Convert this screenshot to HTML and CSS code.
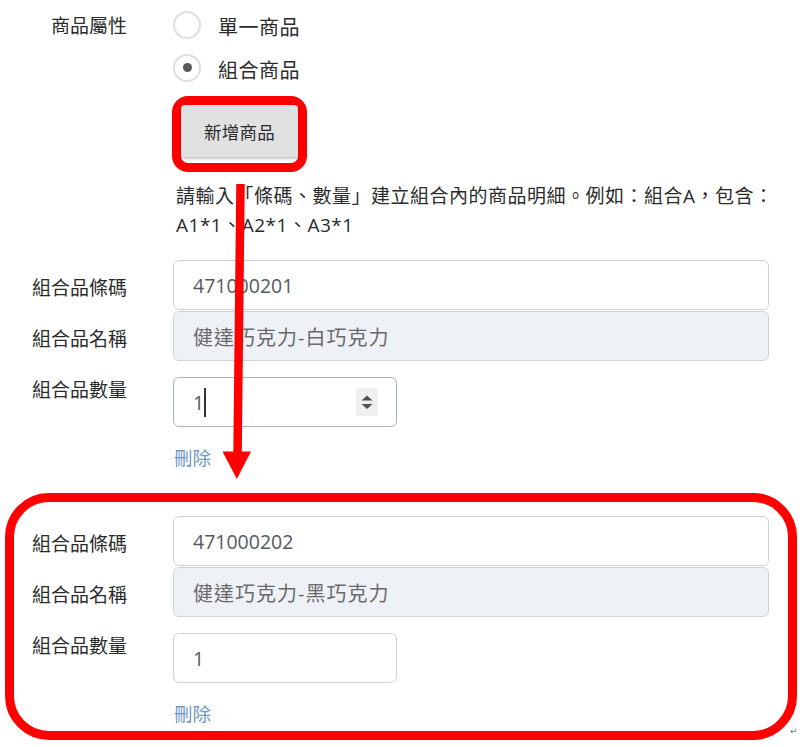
FILE: index.html
```
<!DOCTYPE html>
<html lang="zh-Hant">
<head>
<meta charset="utf-8">
<title>組合商品</title>
<link rel="stylesheet" href="styles.css">
</head>
<body>
<div class="page">
  <div class="type-row">
    <div class="type-label">商品屬性</div>
    <div class="type-controls">
      <label class="radio-item"><span class="radio"></span><span class="radio-text">單一商品</span></label>
      <label class="radio-item"><span class="radio radio-checked"></span><span class="radio-text">組合商品</span></label>
      <div class="btn-highlight"><button class="btn-add" type="button">新增商品</button></div>
      <p class="help">請輸入「條碼、數量」建立組合內的商品明細。例如：組合A，包含：<br>A1*1、A2*1、A3*1</p>
    </div>
  </div>

  <div class="combo-group">
    <div class="field-row">
      <div class="field-label">組合品條碼</div>
      <input class="input" type="text" value="471000201">
    </div>
    <div class="field-row row-tight">
      <div class="field-label">組合品名稱</div>
      <input class="input input-readonly" type="text" value="健達巧克力-白巧克力" readonly>
    </div>
    <div class="field-row row-qty">
      <div class="field-label label-top">組合品數量</div>
      <div class="qty-field qty-focus">
        <span class="qty-value">1</span><span class="caret"></span>
        <span class="spinner">
          <svg width="22" height="28" viewBox="0 0 22 28"><polygon points="5.5,12.5 16.5,12.5 11,7.5" fill="#505050"/><polygon points="5.5,16 16.5,16 11,21" fill="#505050"/></svg>
        </span>
      </div>
    </div>
    <div class="field-row row-delete">
      <div></div>
      <a class="delete-link" href="#">刪除</a>
    </div>
  </div>

  <div class="combo-group combo-boxed">
    <div class="field-row">
      <div class="field-label">組合品條碼</div>
      <input class="input" type="text" value="471000202">
    </div>
    <div class="field-row row-tight">
      <div class="field-label">組合品名稱</div>
      <input class="input input-readonly" type="text" value="健達巧克力-黑巧克力" readonly>
    </div>
    <div class="field-row row-qty">
      <div class="field-label label-top">組合品數量</div>
      <div class="qty-field">
        <span class="qty-value">1</span>
      </div>
    </div>
    <div class="field-row row-delete">
      <div></div>
      <a class="delete-link" href="#">刪除</a>
    </div>
  </div>

  <svg class="arrow" width="802" height="747" viewBox="0 0 802 747">
    <line x1="240.5" y1="184" x2="237.5" y2="456" stroke="#ff0000" stroke-width="8.5"/>
    <polygon points="222.5,451.5 251,451.5 236.8,479" fill="#ff0000"/>
  </svg>
  <span class="para-mark">↵</span>
</div>
</body>
</html>
```

FILE: styles.css
```
* { box-sizing: border-box; }

html, body {
  margin: 0;
  padding: 0;
  background: #ffffff;
}

body {
  font-family: "Open Sans", "Noto Sans CJK TC", sans-serif;
  color: #2b2b2b;
}

.page {
  position: relative;
  width: 802px;
  height: 747px;
  padding-top: 3px;
  overflow: hidden;
}

/* top row: product type */
.type-row {
  display: grid;
  grid-template-columns: 127px minmax(0, 1fr);
  column-gap: 46px;
  padding-right: 33px;
}

.type-label {
  text-align: right;
  font-size: 19px;
  line-height: 43px;
  padding-top: 2px;
  white-space: nowrap;
  color: #2b2b2b;
}

.type-controls {
  display: flex;
  flex-direction: column;
  align-items: flex-start;
}

.radio-item {
  display: flex;
  align-items: center;
  gap: 17px;
  height: 43px;
}

.radio {
  width: 28px;
  height: 28px;
  border: 2px solid #dedede;
  border-radius: 50%;
  display: flex;
  align-items: center;
  justify-content: center;
  background: #ffffff;
}

.radio-checked::after {
  content: "";
  width: 9px;
  height: 9px;
  border-radius: 50%;
  background: #585858;
}

.radio-text {
  font-size: 20px;
  letter-spacing: 0.5px;
  color: #2b2b2b;
  padding-top: 3px;
}

.btn-highlight {
  margin-top: 7px;
  margin-left: -1px;
  border: 9px solid #ff0000;
  border-radius: 16px;
  padding-bottom: 6px;
}

.btn-add {
  display: block;
  width: 117px;
  height: 52px;
  border: none;
  border-radius: 4px;
  background: #e1e1e1;
  box-shadow: 0 2px 3px rgba(0, 0, 0, 0.22);
  font-family: "Open Sans", "Noto Sans CJK TC", sans-serif;
  font-size: 17.5px;
  letter-spacing: 0.3px;
  color: #2b2b2b;
  padding: 0;
}

.help {
  margin: 9.5px 0 0;
  padding-left: 3px;
  font-size: 19px;
  line-height: 29px;
  letter-spacing: 0.5px;
  white-space: nowrap;
  color: #2b2b2b;
}

/* combo groups */
.combo-group {
  display: flex;
  flex-direction: column;
  margin-top: 20.5px;
  padding-right: 33px;
}

.combo-boxed {
  margin: 22.5px 5px 0;
  border: 9px solid #ff0000;
  border-radius: 44px;
  padding: 14px 19px 4px 0;
}

.field-row {
  display: grid;
  grid-template-columns: 127px minmax(0, 1fr);
  column-gap: 46px;
  align-items: center;
}

.combo-boxed .field-row {
  grid-template-columns: 113px minmax(0, 1fr);
}

.row-tight { margin-top: 1px; }
.row-qty { margin-top: 16px; align-items: start; }
.row-delete { margin-top: 17.5px; }

.field-label {
  text-align: right;
  font-size: 19px;
  padding-top: 3px;
  white-space: nowrap;
  color: #2b2b2b;
}

.label-top {
  line-height: 24px;
  padding-top: 1px;
}

.input {
  display: block;
  width: 100%;
  height: 50px;
  border: 1px solid #cdd2dd;
  border-radius: 6px;
  padding: 0 19px;
  background: #ffffff;
  font-family: "Open Sans", "Noto Sans CJK TC", sans-serif;
  font-size: 19.5px;
  color: #555a62;
  outline: none;
}

.input-readonly {
  background: #eef1f6;
  color: #6a6a6a;
  font-size: 20px;
  letter-spacing: 1px;
}

.qty-field {
  display: flex;
  align-items: center;
  width: 224px;
  height: 50px;
  border: 1px solid #cdd2dd;
  border-radius: 6px;
  padding: 0 18px 0 19px;
  font-size: 19.5px;
  color: #555a62;
  background: #ffffff;
}

.qty-focus {
  border-color: #a9b2c4;
}

.caret {
  width: 1.5px;
  height: 29px;
  background: #333333;
}

.spinner {
  margin-left: auto;
  width: 22px;
  height: 28px;
  background: #efefef;
  display: flex;
}

.delete-link {
  justify-self: start;
  padding-left: 1px;
  font-size: 18.5px;
  line-height: 26px;
  color: #6f95c9;
  text-decoration: none;
}

/* annotation overlays */
.arrow {
  position: absolute;
  left: 0;
  top: 0;
  pointer-events: none;
}

.para-mark {
  position: absolute;
  left: 790px;
  top: 726px;
  font-family: "DejaVu Sans", sans-serif;
  font-size: 9px;
  color: #777777;
}
```
